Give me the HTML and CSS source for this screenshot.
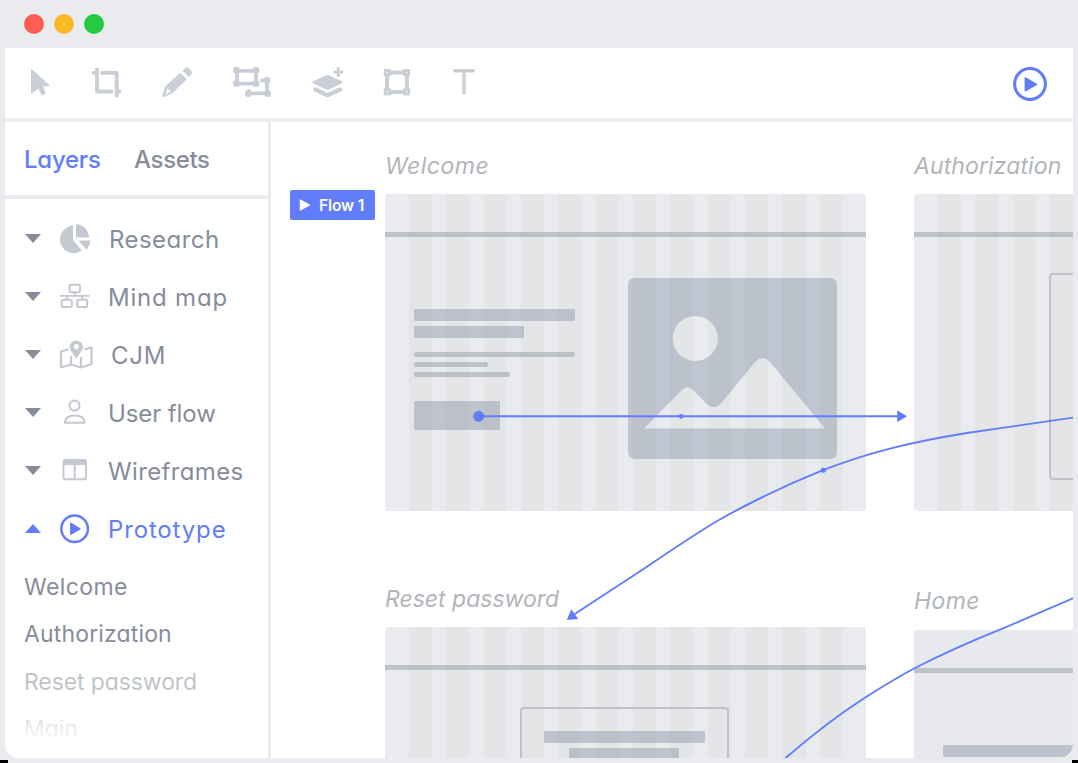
FILE: index.html
```html
<!DOCTYPE html>
<html lang="en">
<head>
<meta charset="utf-8">
<title>Prototype editor</title>
<link rel="stylesheet" href="styles.css">
</head>
<body>
<div class="window">
  <header class="titlebar">
    <span class="dot dot-close"></span><span class="dot dot-min"></span><span class="dot dot-max"></span>
  </header>
  <nav class="toolbar">
    <svg class="tools" width="460" height="70" viewBox="20 48 460 70">
      <g fill="#caced6" stroke="none">
        <path d="M31 69.500Q31 68.600 32 69.300L49.300 85Q50.300 86 49 86.100L43 86.500L45.600 92.500Q46 93.600 45 94L42.500 95Q41.500 95.300 41 94.300L38.300 88.300L32.500 93.300Q31 94 31 92.500Z"/>
        <path d="M182.500 70.700L184.700 68.500Q187 66.300 189.300 68.600L191 70.300Q193.200 72.500 191 74.800L188.700 77Z"/>
        <path fill-rule="evenodd" d="M180.300 72.700L187 79.200L172.500 93L163.800 97.200Q162 97.300 162.300 95.300L165 86.500ZM167.500 88.500L165.500 94.300L171 91.600Z"/>
        <path d="M327.500 74.700L341.500 81Q343.500 82.200 341.500 83.500L329.500 89.300Q327.500 90.200 325.500 89.300L313.500 83.500Q311.500 82.200 313.500 81Z"/>
        <path d="M316 87.200L327.500 93L339.500 87.200L342 88.500Q343.500 89.700 341.800 90.900L329.500 96.700Q327.500 97.600 325.500 96.700L313.700 90.900Q312 89.700 313.500 88.500Z"/>
        <path d="M336.800 67.300h2.800v3.400h3.600v2.700h-3.600v3.600h-2.800v-3.600h-3.500v-2.700h3.500z"/>
      </g>
      <g fill="none" stroke="#caced6" stroke-width="3.800" stroke-linecap="round" stroke-linejoin="round">
        <path d="M93.500 72.800H97M97 69.500V91.500H111.500M102 72.800H116.700V95.500M116.700 91.500H119.500"/>
        <path d="M237 70.800H256V83.600H237ZM267 81V93.300H249M266 80.500H262M249 91V93.500"/>
        <path d="M387 72.500H407V92H387Z"/>
        <path d="M454.700 70.700H473.300M464 71V93" stroke-width="3.400"/>
      </g>
      <g fill="#caced6">
        <circle cx="236.500" cy="70.300" r="3.500"/><circle cx="256" cy="70.300" r="3.500"/><circle cx="236.500" cy="83.600" r="3.500"/><circle cx="256" cy="83.600" r="3.500"/>
        <circle cx="267" cy="80.300" r="3.500"/><circle cx="267.500" cy="93.500" r="3.500"/><circle cx="248.500" cy="93.500" r="3.500"/>
      </g>
      <g fill="#fff" stroke="#caced6" stroke-width="2.900">
        <rect x="385.200" y="70.500" width="4.200" height="4.200"/><rect x="404.500" y="70.500" width="4.200" height="4.200"/><rect x="385.200" y="89.700" width="4.200" height="4.200"/><rect x="404.500" y="89.700" width="4.200" height="4.200"/>
      </g>
    </svg>
    <svg class="play" width="34" height="34" viewBox="0 0 34 34"><circle cx="17" cy="17" r="15.400" fill="none" stroke="#617dfb" stroke-width="3"/><path d="M12.400 11v12.800l11-6.400z" fill="#617dfb" stroke="#617dfb" stroke-width="1.600" stroke-linejoin="round"/></svg>
  </nav>
  <div class="workspace">
    <aside class="sidebar">
      <div class="tabs"><span class="tab tab-active">Layers</span><span class="tab tab-assets">Assets</span></div>
      <div class="tree">
        <div class="row"><i class="caret"></i><svg class="icon" width="36" height="36" viewBox="57 221 36 36"><g fill="#c4c8d1"><path d="M73 225.600V240L82 250.500A13.800 13.800 0 1 1 73 225.600Z"/><path d="M76 224.300A13.200 13.200 0 0 1 89 237.500H76Z"/><path d="M78.500 240.500H90.500Q90 245.500 86.500 249.800Z"/></g></svg><span class="label w-research">Research</span></div>
        <div class="row"><i class="caret"></i><svg class="icon" width="36" height="36" viewBox="57 279 36 36"><g fill="none" stroke="#c4c8d1" stroke-width="2"><rect x="69.500" y="284.800" width="10.500" height="7.400" rx="1.200"/><rect x="61.800" y="299.800" width="10" height="7.200" rx="1.200"/><rect x="77.200" y="299.800" width="10" height="7.200" rx="1.200"/><path d="M60 295.800H89.500M74.800 292V296M67 296V300M82.200 296V300" stroke-width="1.800"/></g></svg><span class="label w-mind">Mind map</span></div>
        <div class="row"><i class="caret"></i><svg class="icon" width="36" height="36" viewBox="57 337 36 36"><path d="M68.500 349.300L61 351.500V367.500L71 364.500L81 367.500L91.500 364V347.500L84.500 349.500M71 356V364.500M81 357V367.500" fill="none" stroke="#c4c8d1" stroke-width="2.200" stroke-linejoin="round"/><path fill-rule="evenodd" fill="#c4c8d1" d="M76.300 340.500A6.800 6.800 0 0 1 83 347.200Q83 350 76.300 358.300Q69.600 350 69.600 347.200A6.800 6.800 0 0 1 76.300 340.500ZM76.300 344A2.600 2.600 0 1 0 76.310 344Z"/></svg><span class="label w-cjm">CJM</span></div>
        <div class="row"><i class="caret"></i><svg class="icon" width="36" height="36" viewBox="57 395 36 36"><g fill="none" stroke="#c4c8d1" stroke-width="2.100"><circle cx="74.500" cy="405.600" r="5"/><path d="M65 422.700C65 417.500 69 415.500 74.800 415.500S84.500 417.500 84.500 422.700Z" stroke-linejoin="round"/></g></svg><span class="label w-flow">User flow</span></div>
        <div class="row"><i class="caret"></i><svg class="icon" width="36" height="36" viewBox="57 453 36 36"><rect x="63.500" y="460" width="22.500" height="19.200" rx="2" fill="none" stroke="#c4c8d1" stroke-width="2"/><path d="M63.500 460h22.500v5H63.500zM73.700 464h2v15h-2z" fill="#c4c8d1"/></svg><span class="label w-wire">Wireframes</span></div>
        <div class="row row-open"><i class="caret"></i><svg class="icon" width="36" height="36" viewBox="57 511 36 36"><circle cx="74.600" cy="528.800" r="13.300" fill="none" stroke="#617dfb" stroke-width="2.500"/><path d="M70.800 523.400V534.200L80 528.800Z" fill="#617dfb" stroke="#617dfb" stroke-width="1.500" stroke-linejoin="round"/></svg><span class="label w-proto">Prototype</span></div>
        <div class="pages">
          <span class="page p-welcome">Welcome</span>
          <span class="page p-auth">Authorization</span>
          <span class="page p-reset">Reset password</span>
          <span class="page p-main">Main</span>
        </div>
      </div>
    </aside>
    <main class="canvas">
      <div class="flow"><svg width="12" height="14" viewBox="0 0 12 14"><path d="M1.300 1.800v10.400L10.700 7z" fill="#fff" stroke="#fff" stroke-linejoin="round"/></svg><span>Flow 1</span></div>
      <section class="frame frame-welcome">
        <h2 class="title t-welcome">Welcome</h2>
        <div class="screen striped">
          <div class="headline"></div>
          <div class="hero">
            <div class="copy"><b class="bar bar-a"></b><b class="bar bar-b"></b><b class="line line-a"></b><b class="line line-b"></b><b class="line line-c"></b><b class="button"></b></div>
            <svg class="picture" width="209" height="181" viewBox="628 278 209 181"><path fill-rule="evenodd" d="M635 278H830Q837 278 837 285V452Q837 459 830 459H635Q628 459 628 452V285Q628 278 635 278ZM695.300 316A22.500 22.500 0 1 0 695.310 316ZM644 428.500L682 390Q687.500 384 693 390L707.500 404.500Q714.500 410.500 721 403.500L755.500 361.500Q762.500 354.500 769.500 361.500L825 428.500Z"/></svg>
          </div>
        </div>
      </section>
      <section class="frame frame-auth">
        <h2 class="title t-auth">Authorization</h2>
        <div class="screen striped"><div class="headline"></div><div class="panel"></div></div>
      </section>
      <section class="frame frame-reset">
        <h2 class="title t-reset">Reset password</h2>
        <div class="screen striped"><div class="headline"></div><div class="panel"><b class="bar bar-a"></b><b class="bar bar-b"></b></div></div>
      </section>
      <section class="frame frame-home">
        <h2 class="title t-home">Home</h2>
        <div class="screen"><div class="headline"></div><b class="bar bar-home"></b></div>
      </section>
      <svg class="links" width="802" height="636" viewBox="271 122 802 636">
        <g fill="none" stroke="#617dfb" stroke-width="1.900">
          <path d="M479 416.300H898"/>
          <path d="M1074 417.500C1040 422.500 1005 427.500 967 433C915 441.500 872 451 823 470.200C785 485.500 755 499.500 718 520.500C692 536 668 552.500 642 570L574 614.500"/>
          <path d="M1074 597.800C1048 609 1027 618.500 1003 628.300C970 641.500 941 654.500 913 669C895 679 880 688 866 697C838 715 812 735 785 758.500"/>
        </g>
        <g fill="#617dfb"><circle cx="478.700" cy="416.300" r="5.500"/><circle cx="681.200" cy="416.300" r="2.400"/><circle cx="823.200" cy="470.300" r="2.500"/><path d="M897.200 410.600V422L907.200 416.300ZM571.300 609.300L578.300 619L566.800 620Z"/></g>
      </svg>
    </main>
  </div>
</div>
</body>
</html>
```

FILE: styles.css
```css
* { box-sizing: border-box; }
body {
  margin: 0;
  width: 1078px;
  height: 763px;
  overflow: hidden;
  background: linear-gradient(#000, #000) left bottom / 8px 3px no-repeat,
    linear-gradient(#000, #000) right bottom / 6px 3px no-repeat, #eaebee;
  font-family: Inter, "Liberation Sans", sans-serif;
  font-feature-settings: "cv11", "ss03";
  color: #878c9d;
}
.window { display: flex; flex-direction: column; height: 758px; padding: 0 5px; }
.titlebar { display: flex; align-items: center; gap: 10px; flex: 0 0 48px; padding-left: 19px; }
.dot { width: 20px; height: 20px; border-radius: 50%; }
.dot-close { background: #fd5e53; }
.dot-min { background: #fab927; }
.dot-max { background: #24ca40; }
.toolbar { display: flex; justify-content: space-between; align-items: center; flex: 0 0 70px; padding: 0 26px 0 15px; background: #fff; }
.play { margin-top: 2px; }
.workspace { display: flex; flex: 1; gap: 3px; padding-top: 4px; }
.sidebar { display: flex; flex-direction: column; width: 263px; gap: 4px; }
.tabs { display: flex; align-items: center; gap: 33px; height: 73px; padding: 2px 0 0 19px; background: #fff; }
.tab { width: 77px; font-size: 24px; font-weight: 500; letter-spacing: -.25px; white-space: nowrap; }
.tab-active { color: #617dfb; }
.tab-assets { letter-spacing: -.35px; }
.tree { flex: 1; padding-top: 11px; background: #fff; border-bottom-left-radius: 14px; overflow: hidden; }
.row { display: flex; align-items: center; height: 58px; padding-left: 20px; }
.caret { width: 16px; height: 9px; margin: 0 16px 1px 0; background: #878c9d; clip-path: polygon(0 0, 100% 0, 50% 100%); }
.icon { margin-right: 15px; }
.label { font-size: 24px; white-space: nowrap; }
.w-research { margin-left: 1px; letter-spacing: .45px; }
.w-mind { letter-spacing: .8px; }
.w-cjm { margin-left: 3px; letter-spacing: .8px; }
.w-flow { letter-spacing: -.1px; }
.w-wire { letter-spacing: .35px; }
.w-proto { letter-spacing: .85px; }
.row-open { color: #617dfb; }
.row-open .caret { background: #617dfb; clip-path: polygon(0 100%, 100% 100%, 50% 0); }
.pages { display: flex; flex-direction: column; padding: 6px 0 0 19px; font-size: 23px; line-height: 47.3px; }
.p-welcome { letter-spacing: .4px; }
.p-auth { letter-spacing: .15px; }
.p-reset { color: #c0c4cb; letter-spacing: -.1px; }
.p-main { color: transparent; background: linear-gradient(#dfe1e5 30%, #fafafb 75%); background-clip: text; -webkit-background-clip: text; }
.canvas { position: relative; flex: 1; background: #fff; border-bottom-right-radius: 14px; overflow: hidden; }
.flow { position: absolute; left: 19px; top: 68px; display: flex; align-items: center; gap: 8px; width: 85px; height: 30px; padding-left: 9px; border-radius: 2px; background: #617dfb; color: #fff; font-size: 15.500px; font-weight: 600; letter-spacing: -.1px; white-space: nowrap; }
.frame { position: absolute; width: 481px; }
.frame-welcome { left: 114px; top: 28px; }
.frame-auth { left: 643px; top: 28px; }
.frame-reset { left: 114px; top: 461px; }
.frame-home { left: 643px; top: 464px; }
.title { height: 32px; margin: 0 0 12px; font-size: 23px; line-height: 32px; font-weight: 400; font-style: italic; color: #b1b5bb; white-space: nowrap; }
.t-welcome { letter-spacing: .5px; }
.t-auth { letter-spacing: .1px; }
.t-home { line-height: 31px; letter-spacing: .4px; }
.screen { height: 317px; border-radius: 3px; background: #e8e9ec; overflow: hidden; }
.striped { background: repeating-linear-gradient(90deg, #e3e5e7 0 23px, #eaebee 23px 37.350px) 23.500px 0 / 434px 100% no-repeat, #eaebee; }
.headline { height: 5px; margin-top: 38px; background: rgba(131, 140, 155, .42); }
.hero { display: flex; gap: 53px; padding: 41px 0 0 29px; }
.copy { display: flex; flex-direction: column; width: 161px; padding-top: 31px; }
.bar, .line, .button { display: block; background: rgba(131, 140, 160, .42); border-radius: 1px; }
.bar { height: 12px; }
.bar-a { width: 161px; }
.bar-b { width: 110px; margin-top: 5px; }
.line { height: 5px; margin-top: 5px; border-radius: 2px; background: rgba(131, 136, 145, .4); }
.line-a { width: 161px; margin-top: 14px; }
.line-b { width: 74px; }
.line-c { width: 96px; }
.button { width: 86px; height: 29px; margin-top: 24px; }
.picture { fill: rgba(131, 142, 165, .4); }
.panel { display: flex; flex-direction: column; width: 209px; height: 207px; margin: 36px 0 0 135px; padding: 22px 0 0 22px; border: 2px solid #bfc2c8; border-radius: 4px; }
.frame-reset .panel { margin-top: 37px; }
.panel .bar-b { margin-left: 25px; }
.bar-home { width: 161px; margin: 72px 0 0 29px; }
.links { position: absolute; left: 0; top: 0; }
```
